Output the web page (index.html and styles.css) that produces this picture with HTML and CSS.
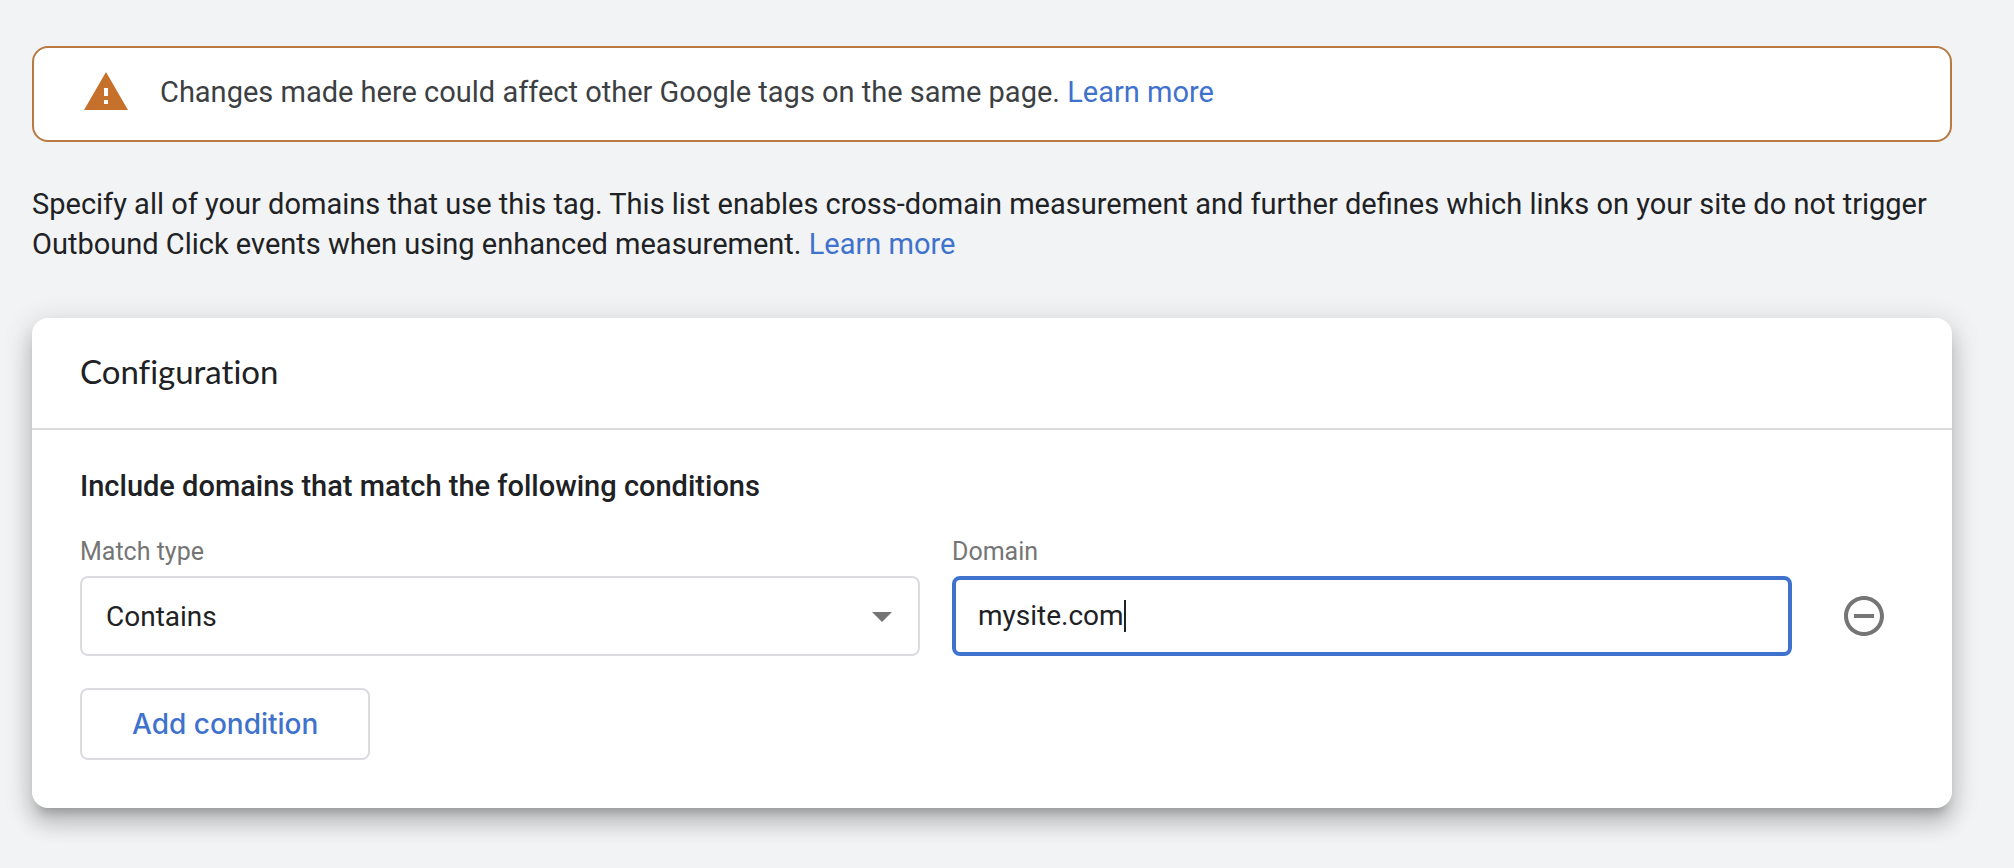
FILE: index.html
```html
<!DOCTYPE html>
<html lang="en">
<head>
<meta charset="utf-8">
<meta name="viewport" content="width=device-width, initial-scale=1">
<title>Configure your domains</title>
<link rel="stylesheet" href="styles.css">
</head>
<body>
<main class="page">
  <div class="banner" role="status">
    <svg class="banner-icon" viewBox="0 0 24 24" aria-hidden="true"><path d="M1 21h22L12 2 1 21zm12-3h-2v-2h2v2zm0-4h-2v-4h2v4z"/></svg>
    <p class="banner-text">Changes made here could affect other Google tags on the same page. <a class="link" href="#">Learn more</a></p>
  </div>

  <p class="intro">Specify all of your domains that use this tag. This list enables cross-domain measurement and further defines which links on your site do not trigger Outbound Click events when using enhanced measurement. <a class="link" href="#">Learn more</a></p>

  <section class="card">
    <header class="card-header">
      <h1 class="card-title">Configuration</h1>
    </header>
    <form class="card-body">
      <h2 class="section-title">Include domains that match the following conditions</h2>
      <div class="condition">
        <div class="field">
          <label class="field-label" for="match-type">Match type</label>
          <div class="select-box">
            <select class="select" id="match-type">
              <option>Contains</option>
              <option>Begins with</option>
              <option>Ends with</option>
              <option>Exactly matches</option>
              <option>Matches RegEx</option>
            </select>
            <svg class="select-arrow" viewBox="0 0 20 10" aria-hidden="true"><path d="M0 0h20L10 10z"/></svg>
          </div>
        </div>
        <div class="field">
          <label class="field-label" for="domain">Domain</label>
          <div class="input-box">
            <input class="input" id="domain" type="text" value="mysite.com"><span class="caret" aria-hidden="true"></span>
          </div>
        </div>
        <button class="remove" type="button" aria-label="Remove condition">
          <svg class="remove-icon" viewBox="0 0 24 24" aria-hidden="true"><path d="M7 11v2h10v-2H7zm5-9C6.48 2 2 6.48 2 12s4.48 10 10 10 10-4.48 10-10S17.52 2 12 2zm0 18c-4.41 0-8-3.59-8-8s3.59-8 8-8 8 3.59 8 8-3.59 8-8 8z"/></svg>
        </button>
      </div>
      <button class="add" type="button">Add condition</button>
    </form>
  </section>
</main>
</body>
</html>
```
FILE: styles.css
```css
* {
  box-sizing: border-box;
}

body {
  margin: 0;
  background: #f1f3f4;
  color: #202124;
  font-family: Roboto, "Liberation Sans", sans-serif;
  font-size: 29px;
  line-height: 40px;
}

.page {
  padding: 46px 62px 60px 32px;
}

.link {
  color: #3f72cd;
  text-decoration: none;
}

.banner {
  display: flex;
  align-items: center;
  gap: 30px;
  padding: 20px 48px 24px;
  border: 2px solid #b97a42;
  border-radius: 16px;
  background: #fff;
  color: #3c4043;
}

.banner-icon {
  flex: none;
  width: 48px;
  height: 48px;
  fill: #c5702b;
}

.banner-text {
  margin: 0;
}

.intro {
  margin: 42px 0 54px;
}

.card {
  border-radius: 16px;
  background: #fff;
  box-shadow:
    0 10px 10px -6px rgba(0, 0, 0, 0.2),
    0 16px 20px 2px rgba(0, 0, 0, 0.14),
    0 6px 28px 4px rgba(0, 0, 0, 0.12);
}

.card-header {
  padding: 33px 48px 37px;
  border-bottom: 2px solid #dadce0;
}

.card-title {
  margin: 0;
  font-family: "Google Sans", Lato, sans-serif;
  font-size: 33px;
  font-weight: 400;
  font-variant-ligatures: none;
  line-height: 40px;
}

.card-body {
  display: flex;
  flex-direction: column;
  align-items: flex-start;
  padding: 36px 48px 48px;
}

.section-title {
  margin: 0 0 30px;
  font-size: 29px;
  font-weight: 500;
  line-height: 40px;
}

.condition {
  display: flex;
  align-items: flex-end;
  gap: 32px;
  width: 100%;
  margin-bottom: 32px;
}

.field {
  flex: 1;
  min-width: 0;
}

.field-label {
  display: block;
  margin-bottom: 8px;
  color: #757575;
  font-size: 25px;
  line-height: 32px;
}

.select-box {
  position: relative;
}

.select,
.input-box {
  width: 100%;
  height: 80px;
  border: 2px solid #dadce0;
  border-radius: 8px;
  background: #fff;
  font-size: 28px;
}

.select {
  display: block;
  padding: 0 72px 0 24px;
  appearance: none;
  color: #202124;
  font-family: inherit;
}

.select-arrow {
  position: absolute;
  top: 36px;
  right: 28px;
  width: 20px;
  height: 10px;
  fill: #757575;
  pointer-events: none;
}

.input-box {
  display: flex;
  align-items: center;
  padding: 0 22px;
  border: 4px solid #3f72cd;
}

.input {
  min-width: 0;
  padding: 0;
  border: 0;
  outline: 0;
  background: none;
  color: #202124;
  font: inherit;
  field-sizing: content;
}

.caret {
  width: 2px;
  height: 32px;
  background: #202124;
}

.remove {
  display: flex;
  flex: none;
  align-items: center;
  justify-content: center;
  width: 80px;
  height: 80px;
  padding: 0;
  border: 0;
  background: none;
}

.remove-icon {
  width: 48px;
  height: 48px;
  fill: #757575;
}

.add {
  height: 72px;
  padding: 0 50px;
  border: 2px solid #dadce0;
  border-radius: 8px;
  background: #fff;
  color: #3f72cd;
  font-family: "Google Sans", Inter, sans-serif;
  font-size: 28px;
  font-weight: 500;
  line-height: 40px;
}
```
